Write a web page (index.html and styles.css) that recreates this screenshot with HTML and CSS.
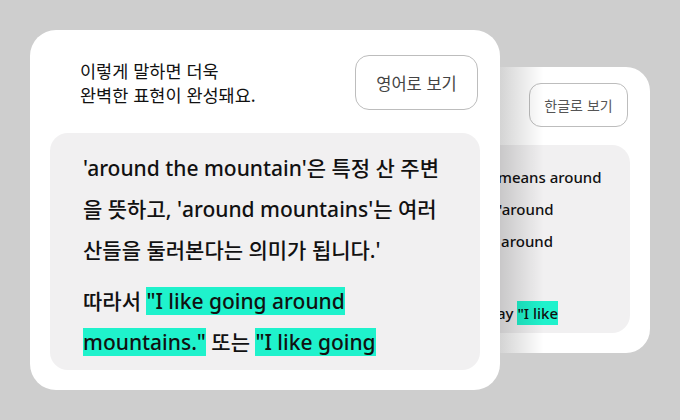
FILE: index.html
```html
<!DOCTYPE html>
<html lang="ko">
<head>
    <meta charset="UTF-8">
    <meta name="viewport" content="width=device-width, initial-scale=1.0">
    <title>표현 다듬기</title>
    <link rel="stylesheet" href="styles.css">
</head>
<body>

    <div class="stage">

        <!-- English card (behind) -->
        <div class="card card-back">
            <div class="card-head">
                <button class="lang-btn">한글로 보기</button>
            </div>
            <div class="answer">
                <p>'around the mountain' means around<br>
                a given mountain, and 'around<br>
                mountains' means just around<br>
                several mountains.'</p>
                <p>Hence you could also say <span class="mark">"I like</span></p>
            </div>
        </div>

        <!-- Korean card (front) -->
        <div class="card card-front">
            <div class="card-head">
                <p class="intro">이렇게 말하면 더욱<br>완벽한 표현이 완성돼요.</p>
                <button class="lang-btn">영어로 보기</button>
            </div>
            <div class="answer">
                <p>'around the mountain'은 특정 산 주변을 뜻하고, 'around mountains'는 여러 산들을 둘러본다는 의미가 됩니다.'</p>
                <p>따라서 <span class="mark">"I like going around mountains."</span> 또는 <span class="mark">"I like going</span></p>
            </div>
        </div>

    </div>

</body>
</html>
```

FILE: styles.css
```css
/* General */
body {
    margin: 0;
    background: #cecece;
    font-family: "Noto Sans", "Noto Sans CJK KR", sans-serif;
    color: #111;
}

.stage {
    position: relative;
    width: 680px;
    height: 420px;
    overflow: hidden;
}

/* Cards */
.card {
    position: absolute;
    background: #fff;
    box-sizing: border-box;
}

.card-front {
    left: 30px;
    top: 30px;
    width: 470px;
    height: 360px;
    border-radius: 26px;
    padding: 25px 20px 20px;
    z-index: 2;
}

.card-back {
    left: 277px;
    top: 67px;
    width: 373px;
    height: 286px;
    border-radius: 24px;
    padding: 16px 20px 20px 16px;
    z-index: 1;
}

/* shade left by the front card */
.card-back::after {
    content: "";
    position: absolute;
    top: 0;
    bottom: 0;
    left: 223px;
    width: 44px;
    background: linear-gradient(to right, rgba(0, 0, 0, 0.17), rgba(0, 0, 0, 0));
}

.card-head {
    display: flex;
    align-items: center;
    justify-content: space-between;
}

.card-front .card-head {
    padding: 0 2px 0 30px;
    margin-bottom: 23px;
}

.card-back .card-head {
    justify-content: flex-end;
    padding-right: 2px;
    margin-bottom: 18px;
}

.intro {
    margin: 0;
    font-family: "Noto Sans CJK KR", sans-serif;
    font-size: 17.5px;
    line-height: 24px;
}

.lang-btn {
    background: #fff;
    border: 1px solid #bdbdbd;
    color: #444;
    font-family: "Noto Sans CJK KR", sans-serif;
    cursor: pointer;
}

.card-front .lang-btn {
    width: 123px;
    height: 55px;
    border-radius: 14px;
    font-size: 16.5px;
}

.card-back .lang-btn {
    width: 99px;
    height: 44px;
    border-radius: 12px;
    font-size: 14px;
    color: #555;
}

/* Answer box */
.answer {
    background: #f1f0f1;
    border-radius: 18px;
    overflow: hidden;
    font-weight: 500;
}

.answer p {
    margin: 0;
}

.card-front .answer {
    height: 237px;
    box-sizing: border-box;
    padding: 15px 22px 0 33px;
    font-size: 21px;
    line-height: 41px;
}

.card-front .answer p + p {
    margin-top: 10px;
}

.card-back .answer {
    height: 188px;
    box-sizing: border-box;
    padding: 16px 0 0 41px;
    font-size: 15px;
    line-height: 32px;
    white-space: nowrap;
}

.card-back .answer p + p {
    margin-top: 8px;
}

.card-back .mark {
    padding: 2px 0;
}

.mark {
    background: #1ff2cc;
}
```
